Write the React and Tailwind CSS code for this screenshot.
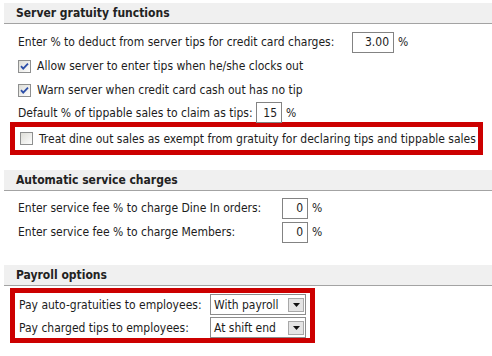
import React from 'react';

const Check = ({ checked }) => (
  <svg width="13" height="13" viewBox="0 0 13 13" className="shrink-0">
    <defs>
      <linearGradient id="cbg" x1="0" y1="0" x2="1" y2="1">
        <stop offset="0" stopColor="#dcdcd6" />
        <stop offset="1" stopColor="#ffffff" />
      </linearGradient>
    </defs>
    <rect x="0.5" y="0.5" width="12" height="12" fill="url(#cbg)" stroke="#8e8f8f" />
    {checked && (
      <path d="M3 6.2 L5.2 8.6 L10 3.6" fill="none" stroke="#2d4fa8" strokeWidth="1.8" />
    )}
  </svg>
);

const Header = ({ children }) => (
  <div className="ml-[4px] h-[21px] bg-[#f0f0f0] border-b border-[#a3a3a3] flex items-center pl-[12px] font-bold text-[#222]">
    {children}
  </div>
);

const Box = ({ value, w }) => (
  <div className={`${w} h-[21px] border border-[#838383] bg-white flex items-center justify-end pr-[4px]`}>
    {value}
  </div>
);

const Select = ({ value }) => (
  <div className="w-[96px] h-[21px] border border-[#8c8c8c] bg-white flex items-center pl-[3px] pr-[1px]">
    <span className="flex-1">{value}</span>
    <div className="w-[16px] h-[14px] bg-[#e4e4e4] border border-[#a8a8a8] flex items-center justify-center">
      <svg width="7" height="4" viewBox="0 0 7 4">
        <path d="M0 0 H7 L3.5 4 Z" fill="#111" />
      </svg>
    </div>
  </div>
);

export default function App() {
  return (
    <div
      className="w-[492px] h-[356px] bg-white overflow-hidden text-[12px] leading-[14px] text-[#1c1c1c] pt-[3px]"
      style={{ fontFamily: '"DejaVu Sans Condensed", "DejaVu Sans", Tahoma, sans-serif' }}
    >
      {/* Server gratuity */}
      <Header>Server gratuity functions</Header>
      <div className="pl-[18px]">
        <div className="mt-[7px] h-[22px] grid grid-cols-[334px_auto_auto] items-center justify-start">
          <span>Enter % to deduct from server tips for credit card charges:</span>
          <Box value="3.00" w="w-[42px]" />
          <span className="ml-[4px]">%</span>
        </div>
        <div className="mt-px h-[24px] flex items-center gap-[6px]">
          <Check checked />
          <span>Allow server to enter tips when he/she clocks out</span>
        </div>
        <div className="h-[24px] flex items-center gap-[6px]">
          <Check checked />
          <span>Warn server when credit card cash out has no tip</span>
        </div>
        <div className="h-[20px] grid grid-cols-[238px_auto_auto] items-center justify-start">
          <span>Default % of tippable sales to claim as tips:</span>
          <Box value="15" w="w-[26px]" />
          <span className="ml-[4px]">%</span>
        </div>
      </div>
      <div className="ml-[10px] w-[473px] h-[33px] border-[5px] border-[#cc0000] flex items-center pl-[5px] gap-[6px]">
        <Check />
        <span>Treat dine out sales as exempt from gratuity for declaring tips and tippable sales</span>
      </div>

      {/* Automatic service charges */}
      <div className="mt-[15px]">
        <Header>Automatic service charges</Header>
      </div>
      <div className="pl-[18px]">
        <div className="mt-[6px] h-[22px] grid grid-cols-[264px_auto_auto] items-center justify-start">
          <span>Enter service fee % to charge Dine In orders:</span>
          <Box value="0" w="w-[26px]" />
          <span className="ml-[4px]">%</span>
        </div>
        <div className="mt-[2px] h-[22px] grid grid-cols-[264px_auto_auto] items-center justify-start">
          <span>Enter service fee % to charge Members:</span>
          <Box value="0" w="w-[26px]" />
          <span className="ml-[4px]">%</span>
        </div>
      </div>

      {/* Payroll */}
      <div className="mt-[22px]">
        <Header>Payroll options</Header>
      </div>
      <div className="mt-[2px] ml-[10px] w-[305px] h-[55px] border-[5px] border-[#cc0000] pl-[4px] pt-px grid grid-cols-[191px_96px] gap-y-[2px] items-center">
        <span>Pay auto-gratuities to employees:</span>
        <Select value="With payroll" />
        <span>Pay charged tips to employees:</span>
        <Select value="At shift end" />
      </div>
    </div>
  );
}
